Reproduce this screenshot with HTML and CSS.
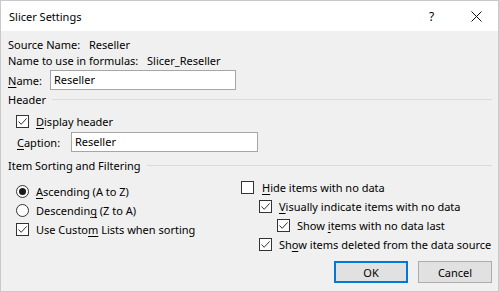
FILE: index.html
```html
<!DOCTYPE html>
<html>
<head>
<meta charset="utf-8">
<link rel="stylesheet" href="styles.css">
</head>
<body>
<div class="dialog">
  <div class="titlebar">
    <span class="title">Slicer Settings</span>
    <span class="help">?</span>
    <span class="close">
      <svg width="11" height="11" viewBox="0 0 11 11"><path d="M0.5 0.5 L10.5 10.5 M10.5 0.5 L0.5 10.5" stroke="#111" stroke-width="1" fill="none"/></svg>
    </span>
  </div>
  <div class="content">
    <div class="line first"><span class="k k1">Source Name:</span><span>Reseller</span></div>
    <div class="line"><span class="k k2">Name to use in formulas:</span><span>Slicer_Reseller</span></div>
    <div class="field name-row"><span class="flabel"><u>N</u>ame:</span><div class="input name-input">Reseller</div></div>

    <div class="group gh"><span>Header</span><div class="rule"></div></div>
    <div class="check-row dh">
      <span class="box"><svg width="11" height="11" viewBox="0 0 11 11"><path d="M1.5 5.5 L4.2 8.3 L9.6 2.4" stroke="#333" stroke-width="1" fill="none"/></svg></span>
      <span><u>D</u>isplay header</span>
    </div>
    <div class="field cap-row"><span class="flabel cap"><u>C</u>aption:</span><div class="input cap-input">Reseller</div></div>

    <div class="group gs"><span>Item Sorting and Filtering</span><div class="rule"></div></div>
    <div class="cols">
      <div class="col left">
        <div class="opt"><span class="radio on"><span class="dot"></span></span><span><u>A</u>scending (A to Z)</span></div>
        <div class="opt"><span class="radio"></span><span>Descendin<u>g</u> (Z to A)</span></div>
        <div class="opt"><span class="box"><svg width="11" height="11" viewBox="0 0 11 11"><path d="M1.5 5.5 L4.2 8.3 L9.6 2.4" stroke="#333" stroke-width="1" fill="none"/></svg></span><span>Use Custo<u>m</u> Lists when sorting</span></div>
      </div>
      <div class="col right">
        <div class="opt"><span class="box unchecked"></span><span class="lbl-hide"><u>H</u>ide items with no data</span></div>
        <div class="opt i1"><span class="box"><svg width="11" height="11" viewBox="0 0 11 11"><path d="M1.5 5.5 L4.2 8.3 L9.6 2.4" stroke="#333" stroke-width="1" fill="none"/></svg></span><span><u>V</u>isually indicate items with no data</span></div>
        <div class="opt i2"><span class="box"><svg width="11" height="11" viewBox="0 0 11 11"><path d="M1.5 5.5 L4.2 8.3 L9.6 2.4" stroke="#333" stroke-width="1" fill="none"/></svg></span><span>Show <u>i</u>tems with no data last</span></div>
        <div class="opt i1"><span class="box"><svg width="11" height="11" viewBox="0 0 11 11"><path d="M1.5 5.5 L4.2 8.3 L9.6 2.4" stroke="#333" stroke-width="1" fill="none"/></svg></span><span>Sh<u>o</u>w items deleted from the data source</span></div>
      </div>
    </div>
    <div class="buttons">
      <div class="btn ok">OK</div>
      <div class="btn cancel">Cancel</div>
    </div>
  </div>
</div>
</body>
</html>
```
FILE: styles.css
```css
* { box-sizing: border-box; }
html, body { margin: 0; padding: 0; background: #f0f0f0; }
body {
  font-family: "Noto Sans", "Open Sans", sans-serif;
  font-size: 11px;
  color: #000;
}
u { text-decoration: underline; text-underline-offset: 2px; text-decoration-thickness: 1px; }
.dialog {
  width: 499px;
  height: 292px;
  border: 1px solid #c9c9c9;
  background: #f0f0f0;
  display: flex;
  flex-direction: column;
  overflow: hidden;
}
.titlebar {
  height: 30px;
  background: #fff;
  display: flex;
  align-items: center;
  padding-left: 8px;
  font-size: 11px;
}
.title { flex: 1; }
.help { width: 12px; margin-right: 30px; font-size: 12px; }
.close { width: 11px; height: 11px; margin-right: 16px; display: flex; }
.content {
  flex: 1;
  display: flex;
  flex-direction: column;
  padding: 0 6px 0 7px;
}
.line { height: 16px; line-height: 16px; display: flex; white-space: nowrap; }
.line.first { margin-top: 6px; }
.k1 { width: 81px; }
.k2 { width: 139px; }
.field { display: flex; align-items: center; height: 20px; }
.name-row { margin-top: 1px; }
.flabel { width: 42px; }
.flabel.cap { padding-left: 9px; width: 63px; }
.input {
  height: 20px;
  border: 1px solid #a6a6a6;
  background: #fff;
  padding-left: 3px;
  line-height: 18px;
}
.name-input { width: 186px; }
.cap-input { width: 187px; }
.group {
  display: flex;
  align-items: center;
  height: 16px;
  line-height: 16px;
}
.gh { margin-top: 2px; }
.gs { margin-top: 6px; }
.rule { flex: 1; border-top: 1px solid #dadada; margin-left: 6px; margin-top: -1px; }
.check-row { display: flex; align-items: center; height: 16px; padding-left: 8px; margin-top: 5px; }
.cap-row { margin-top: 3px; }
.box {
  width: 13px;
  height: 13px;
  border: 1px solid #333;
  background: #fff;
  display: flex;
  align-items: center;
  justify-content: center;
  margin-right: 7px;
  flex: none;
}
.box.unchecked { margin-right: 8px; }
.radio {
  width: 13px;
  height: 13px;
  border: 1px solid #333;
  border-radius: 50%;
  background: #fff;
  display: flex;
  align-items: center;
  justify-content: center;
  margin-right: 7px;
  flex: none;
}
.dot { width: 7px; height: 7px; border-radius: 50%; background: #1a1a1a; }
.cols { display: flex; }
.col { display: flex; flex-direction: column; }
.left { width: 233px; flex: none; padding-left: 8px; margin-top: 8px; }
.right { margin-top: 4px; }
.opt { display: flex; align-items: center; height: 19px; white-space: nowrap; }
.i1 { padding-left: 18px; }
.i2 { padding-left: 36px; }
.buttons {
  display: flex;
  justify-content: flex-end;
  gap: 10px;
  margin-top: 7px;
}
.btn {
  width: 74px;
  height: 22px;
  background: #e1e1e1;
  display: flex;
  align-items: center;
  justify-content: center;
}
.ok { border: 2px solid #0078d7; }
.cancel { border: 1px solid #adadad; }
```
